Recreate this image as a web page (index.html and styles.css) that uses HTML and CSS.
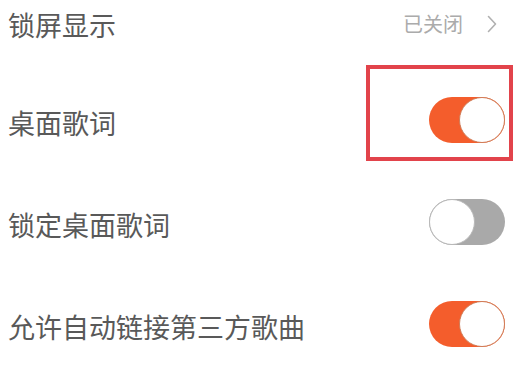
FILE: index.html
```html
<!DOCTYPE html>
<html lang="zh-CN">
<head>
<meta charset="utf-8">
<title>设置</title>
<link rel="stylesheet" href="styles.css">
</head>
<body>
<div class="list">
  <div class="row row-first">
    <span class="label">锁屏显示</span>
    <span class="value">
      <span class="value-text">已关闭</span>
      <svg class="chevron" width="10" height="18" viewBox="0 0 10 18"><path d="M1.5 1.5 L8.5 9 L1.5 16.5" fill="none" stroke="#b0b0b0" stroke-width="1.6" stroke-linecap="round" stroke-linejoin="round"/></svg>
    </span>
  </div>
  <div class="row">
    <span class="label">桌面歌词</span>
    <span class="toggle-wrap">
      <span class="toggle on"><span class="knob"></span></span>
      <span class="highlight"></span>
    </span>
  </div>
  <div class="row">
    <span class="label">锁定桌面歌词</span>
    <span class="toggle-wrap">
      <span class="toggle off"><span class="knob"></span></span>
    </span>
  </div>
  <div class="row">
    <span class="label">允许自动链接第三方歌曲</span>
    <span class="toggle-wrap">
      <span class="toggle on"><span class="knob"></span></span>
    </span>
  </div>
</div>
</body>
</html>
```

FILE: styles.css
```css
html, body {
  margin: 0;
  padding: 0;
  background: #ffffff;
}
body {
  width: 525px;
  height: 388px;
  overflow: hidden;
  font-family: "Noto Sans CJK SC", "Noto Sans", sans-serif;
}
.list {
  margin-top: -25px;
  display: flex;
  flex-direction: column;
}
.row {
  height: 102px;
  display: flex;
  align-items: center;
  justify-content: space-between;
  padding: 0 20px 0 8px;
}
.row-first {
  height: 94px;
}
.label {
  font-size: 27px;
  color: #595959;
  padding-top: 6px;
  line-height: 1.2;
}
.value {
  display: flex;
  align-items: center;
  padding-top: 4px;
}
.value-text {
  font-size: 20px;
  color: #ababab;
  line-height: 1.2;
}
.chevron {
  margin-left: 24px;
  margin-right: 8px;
}
.toggle-wrap {
  position: relative;
  display: flex;
}
.toggle {
  width: 76px;
  height: 46px;
  border-radius: 23px;
  display: flex;
  align-items: center;
  box-sizing: border-box;
}
.toggle.on {
  background: #f45d2c;
  justify-content: flex-end;
}
.toggle.off {
  background: #a9a9a9;
  justify-content: flex-start;
}
.knob {
  width: 46px;
  height: 46px;
  border-radius: 50%;
  background: #ffffff;
  box-sizing: border-box;
}
.toggle.on .knob {
  border: 1.5px solid #cf7c57;
}
.toggle.off .knob {
  border: 1.5px solid #b8b8b8;
}
.highlight {
  position: absolute;
  left: -63px;
  top: -32px;
  right: -8px;
  bottom: -18px;
  border: 4px solid #e2434b;
}
```
